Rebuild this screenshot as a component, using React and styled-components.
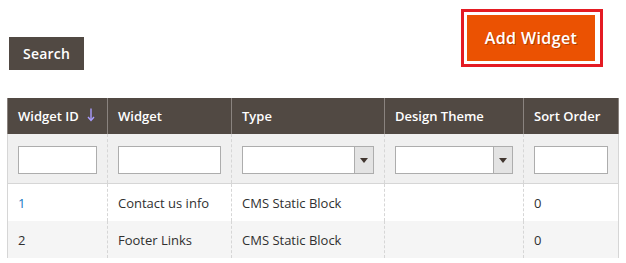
import React from 'react';
import styled, { createGlobalStyle } from 'styled-components';

const GlobalStyle = createGlobalStyle`
  body {
    margin: 0;
    padding: 0;
    background: #fff;
    font-family: "Open Sans", "Liberation Sans", sans-serif;
    color: #303030;
  }
`;

const widgets = [
  { id: 1, name: 'Contact us info', type: 'CMS Static Block', theme: '', order: 0, link: true },
  { id: 2, name: 'Footer Links', type: 'CMS Static Block', theme: '', order: 0, link: false },
];

const SortArrow = () => (
  <svg width="8" height="14" viewBox="0 0 8 14" style={{ marginLeft: 8, verticalAlign: '-1px' }}>
    <path d="M4 0.5 V12" stroke="#a99cff" strokeWidth="1.4" fill="none" />
    <path d="M1 9 L4 12.5 L7 9" stroke="#a99cff" strokeWidth="1.4" fill="none" />
  </svg>
);

const App = () => (
  <>
    <GlobalStyle />
    <Page>
      <Toolbar>
        <SearchButton>Search</SearchButton>
        <Highlight>
          <AddButton>Add Widget</AddButton>
        </Highlight>
      </Toolbar>
      <Grid>
        <colgroup>
          <col style={{ width: 100 }} />
          <col style={{ width: 124 }} />
          <col style={{ width: 153 }} />
          <col style={{ width: 139 }} />
          <col style={{ width: 95 }} />
        </colgroup>
        <thead>
          <tr>
            <Th>Widget ID<SortArrow /></Th>
            <Th>Widget</Th>
            <Th>Type</Th>
            <Th>Design Theme</Th>
            <Th>Sort Order</Th>
          </tr>
        </thead>
        <tbody>
          <FilterRow>
            <FilterCell><TextInput /></FilterCell>
            <FilterCell><TextInput /></FilterCell>
            <FilterCell><Select><ArrowBox /></Select></FilterCell>
            <FilterCell><Select><ArrowBox /></Select></FilterCell>
            <FilterCell><TextInput /></FilterCell>
          </FilterRow>
          {widgets.map((w, i) => (
            <DataRow key={w.id} $striped={i % 2 === 1}>
              <Td><IdText $link={w.link}>{w.id}</IdText></Td>
              <Td>{w.name}</Td>
              <Td>{w.type}</Td>
              <Td>{w.theme}</Td>
              <Td>{w.order}</Td>
            </DataRow>
          ))}
        </tbody>
      </Grid>
    </Page>
  </>
);

const Page = styled.div`
  width: 626px;
  height: 263px;
  overflow: hidden;
`;

const Toolbar = styled.div`
  display: flex;
  justify-content: space-between;
  align-items: flex-start;
  padding: 9px 23px 0 9px;
  box-sizing: border-box;
  height: 98px;
`;

const SearchButton = styled.button`
  margin-top: 28px;
  width: 75px;
  height: 33px;
  background: #514943;
  color: #fff;
  border: none;
  border-radius: 0;
  font-family: "Open Sans", "Liberation Sans", sans-serif;
  font-size: 14px;
  font-weight: 600;
  letter-spacing: 0.2px;
  padding: 0;
  cursor: pointer;
`;

const Highlight = styled.div`
  border: 3px solid #e41b23;
  padding: 3px 5px 3px 3px;
  display: flex;
`;

const AddButton = styled.button`
  width: 128px;
  height: 46px;
  background: #eb5202;
  color: #fff;
  border: none;
  font-family: "Open Sans", "Liberation Sans", sans-serif;
  font-size: 16px;
  font-weight: 600;
  letter-spacing: 0.4px;
  text-shadow: 1px 1px 0 rgba(0, 0, 0, 0.25);
  padding: 0;
  cursor: pointer;
`;

const Grid = styled.table`
  margin-left: 7px;
  width: 611px;
  table-layout: fixed;
  border-collapse: collapse;
  font-size: 13px;
`;

const Th = styled.th`
  height: 36px;
  background: #514943;
  color: #fff;
  font-weight: 600;
  text-align: left;
  padding: 0 8px 0 10px;
  border-left: 1px solid #8a837f;
  border-right: 1px solid #8a837f;
  white-space: nowrap;
`;

const FilterRow = styled.tr`
  background: #f0f0f0;
  border-bottom: 1px solid #d6d6d6;
`;

const FilterCell = styled.td`
  height: 49px;
  padding: 0 10px 0 10px;
  border-left: 1px dashed #d6d6d6;
  border-right: 1px dashed #d6d6d6;
  &:first-child { border-left: 1px solid #d6d6d6; }
  &:last-child { border-right: 1px solid #d6d6d6; }
`;

const TextInput = styled.input`
  display: block;
  width: 100%;
  height: 28px;
  box-sizing: border-box;
  border: 1px solid #adadad;
  background: #fff;
  margin-top: 2px;
`;

const Select = styled.div`
  display: flex;
  justify-content: flex-end;
  height: 28px;
  box-sizing: border-box;
  border: 1px solid #adadad;
  background: #fff;
  margin-top: 2px;
`;

const ArrowBox = styled.div`
  width: 18px;
  background: #e3e3e3;
  border-left: 1px solid #adadad;
  position: relative;
  &::after {
    content: '';
    position: absolute;
    left: 5px;
    top: 11px;
    border-left: 4px solid transparent;
    border-right: 4px solid transparent;
    border-top: 5px solid #41362f;
  }
`;

const DataRow = styled.tr`
  background: ${({ $striped }) => ($striped ? '#f5f5f5' : '#fff')};
`;

const Td = styled.td`
  height: 37px;
  padding: 0 8px 0 10px;
  color: #303030;
  border-left: 1px dashed #d6d6d6;
  border-right: 1px dashed #d6d6d6;
  white-space: nowrap;
  &:first-child { border-left: 1px solid #d6d6d6; }
  &:last-child { border-right: 1px solid #d6d6d6; }
`;

const IdText = styled.span`
  color: ${({ $link }) => ($link ? '#1979c3' : '#303030')};
`;

export default App;
